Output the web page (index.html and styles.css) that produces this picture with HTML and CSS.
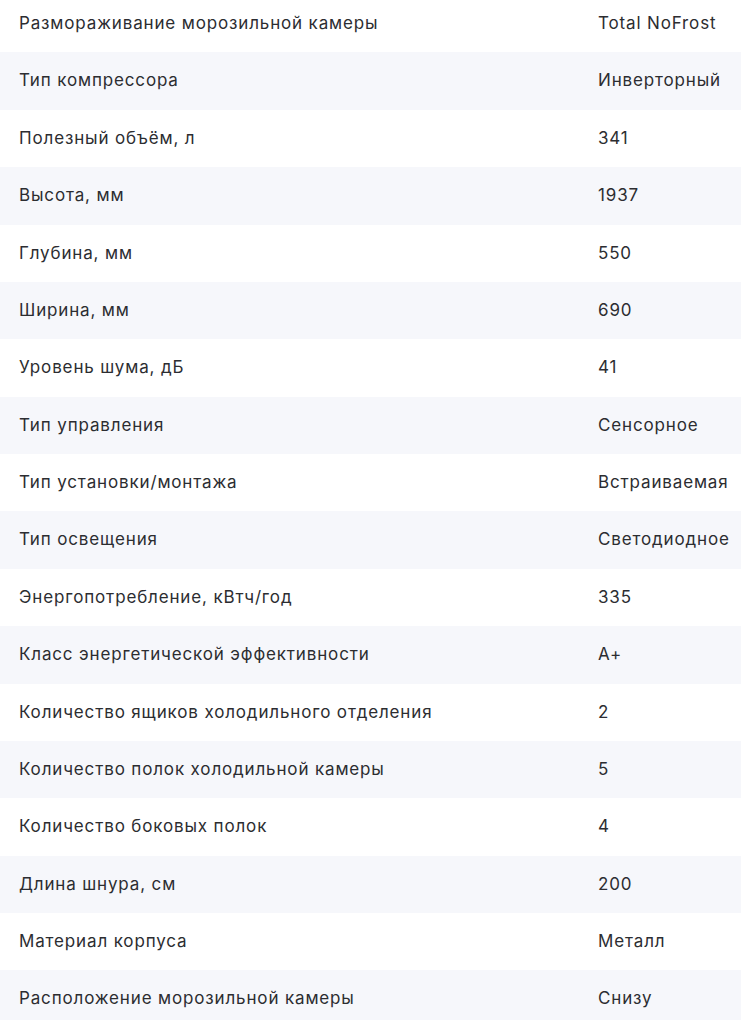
FILE: index.html
```html
<!DOCTYPE html>
<html lang="ru">
<head>
<meta charset="utf-8">
<link rel="stylesheet" href="styles.css">
</head>
<body>
<div class="specs">
  <div class="row"><div class="name">Размораживание морозильной камеры</div><div class="value">Total NoFrost</div></div>
  <div class="row"><div class="name">Тип компрессора</div><div class="value">Инверторный</div></div>
  <div class="row"><div class="name">Полезный объём, л</div><div class="value">341</div></div>
  <div class="row"><div class="name">Высота, мм</div><div class="value">1937</div></div>
  <div class="row"><div class="name">Глубина, мм</div><div class="value">550</div></div>
  <div class="row"><div class="name">Ширина, мм</div><div class="value">690</div></div>
  <div class="row"><div class="name">Уровень шума, дБ</div><div class="value">41</div></div>
  <div class="row"><div class="name">Тип управления</div><div class="value">Сенсорное</div></div>
  <div class="row"><div class="name">Тип установки/монтажа</div><div class="value">Встраиваемая</div></div>
  <div class="row"><div class="name">Тип освещения</div><div class="value">Светодиодное</div></div>
  <div class="row"><div class="name">Энергопотребление, кВтч/год</div><div class="value">335</div></div>
  <div class="row"><div class="name">Класс энергетической эффективности</div><div class="value">A+</div></div>
  <div class="row"><div class="name">Количество ящиков холодильного отделения</div><div class="value">2</div></div>
  <div class="row"><div class="name">Количество полок холодильной камеры</div><div class="value">5</div></div>
  <div class="row"><div class="name">Количество боковых полок</div><div class="value">4</div></div>
  <div class="row"><div class="name">Длина шнура, см</div><div class="value">200</div></div>
  <div class="row"><div class="name">Материал корпуса</div><div class="value">Металл</div></div>
  <div class="row"><div class="name">Расположение морозильной камеры</div><div class="value">Снизу</div></div>
</div>
</body>
</html>
```

FILE: styles.css
```css
html, body {
  margin: 0;
  padding: 0;
  background: #ffffff;
}
body {
  font-family: Inter, "Noto Sans", sans-serif;
  font-size: 17px;
  letter-spacing: 0.85px;
  color: #2c2d31;
  overflow: hidden;
}
.specs {
  margin-top: -5px;
}
.row {
  display: grid;
  grid-template-columns: 579px 1fr;
  padding: 19px 0 19px 19px;
  line-height: 19.375px;
}
.row:nth-child(even) {
  background: #f6f7fb;
}
.name, .value {
  white-space: nowrap;
}
```
